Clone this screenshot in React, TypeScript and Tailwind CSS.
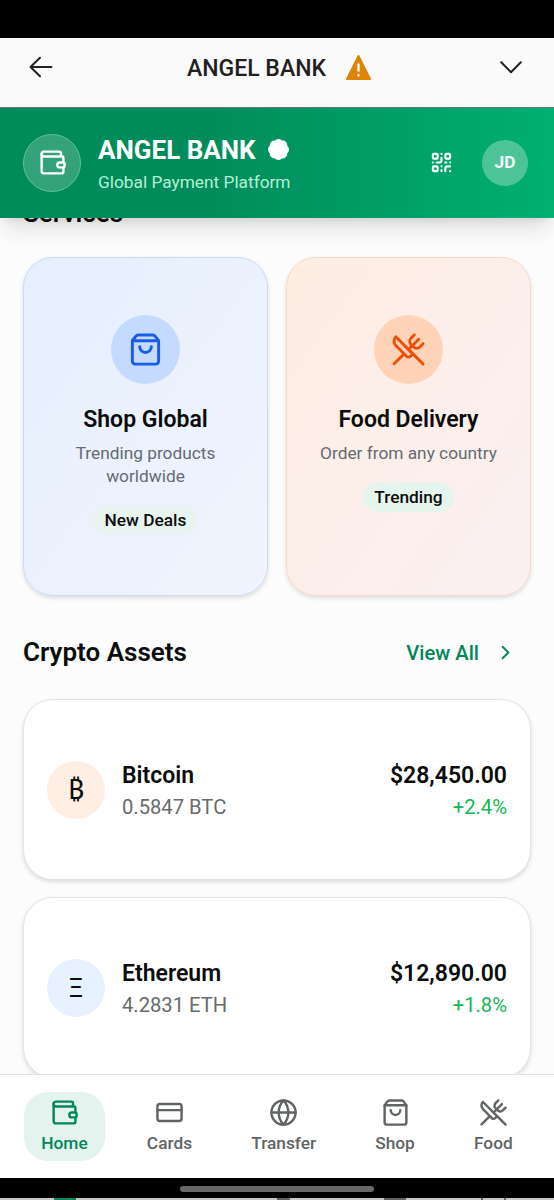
import type { ReactNode } from "react";
import {
  ChevronRight,
  CreditCard,
  Globe,
  QrCode,
  ShoppingBag,
  UtensilsCrossed,
  Wallet,
  type LucideIcon,
} from "lucide-react";

type Service = {
  title: string;
  description: string;
  badge: string;
  icon: LucideIcon;
  cardClass: string;
  iconClass: string;
  badgeClass: string;
};

type Asset = {
  name: string;
  symbol: string;
  amount: string;
  value: string;
  change: string;
  iconClass: string;
};

const services: Service[] = [
  {
    title: "Shop Global",
    description: "Trending products worldwide",
    badge: "New Deals",
    icon: ShoppingBag,
    cardClass: "border-[#c9daf3] from-[#e6effd] to-[#f0f4fe]",
    iconClass: "bg-[#c4daff] text-[#1a5cea]",
    badgeClass: "bg-[#e9f3ef]",
  },
  {
    title: "Food Delivery",
    description: "Order from any country",
    badge: "Trending",
    icon: UtensilsCrossed,
    cardClass: "border-[#f5d9c9] from-[#fdede2] to-[#fbf0f2]",
    iconClass: "bg-[#ffd3b7] text-[#f04e06]",
    badgeClass: "bg-[#e6f4ee]",
  },
];

const assets: Asset[] = [
  {
    name: "Bitcoin",
    symbol: "₿",
    amount: "0.5847 BTC",
    value: "$28,450.00",
    change: "+2.4%",
    iconClass: "bg-[#ffeee3] pb-[4px] font-['Noto_Sans',sans-serif] text-[28px]",
  },
  {
    name: "Ethereum",
    symbol: "Ξ",
    amount: "4.2831 ETH",
    value: "$12,890.00",
    change: "+1.8%",
    iconClass: "bg-[#e7f1ff] pt-px text-[26px]",
  },
];

const navItems: { label: string; icon: LucideIcon }[] = [
  { label: "Home", icon: Wallet },
  { label: "Cards", icon: CreditCard },
  { label: "Transfer", icon: Globe },
  { label: "Shop", icon: ShoppingBag },
  { label: "Food", icon: UtensilsCrossed },
];

const TitleBar = () => (
  <div className="flex h-[70px] shrink-0 items-center border-b border-[#5f7d70] bg-[#fafafa] pr-[32px] pl-[29px] pb-[11px]">
    <button aria-label="Back">
      <svg width="24" height="22" viewBox="0 0 24 22" fill="none" stroke="#222" strokeWidth="2" strokeLinecap="round" strokeLinejoin="round">
        <path d="M22.5 11H1.5M11 1.8 1.5 11l9.5 9.2" />
      </svg>
    </button>
    <h1 className="ml-[134px] pt-[4px] text-[23px] font-medium text-[#202020]">ANGEL BANK</h1>
    <svg className="ml-[19px]" width="27" height="27" viewBox="0 0 27 27">
      <path d="M13.5 2 25 25H2Z" fill="#dc8508" stroke="#dc8508" strokeWidth="2" strokeLinejoin="round" />
      <path d="M13.5 9.5v8M13.5 20v2.4" stroke="#fff" strokeWidth="2.2" />
    </svg>
    <svg className="ml-auto" width="22" height="13" viewBox="0 0 22 13" fill="none" stroke="#222" strokeWidth="2" strokeLinecap="round" strokeLinejoin="round">
      <path d="m1.2 1.3 9.8 9.9 9.8-9.9" />
    </svg>
  </div>
);

const Header = () => (
  <header className="relative z-10 flex h-[110px] shrink-0 items-center bg-linear-to-r from-[#008b5a] from-35% to-[#00b072] pr-[26px] pb-px pl-[23px] shadow-[0_14px_22px_-4px_rgba(0,0,0,0.12),0_6px_9px_-6px_rgba(0,0,0,0.12)]">
    <div className="flex size-[58px] items-center justify-center rounded-full border border-[#5cc49a] bg-[#33a27b]">
      <Wallet className="size-[29px] text-white" />
    </div>
    <div className="ml-[17px]">
      <div className="flex items-center">
        <span className="text-[26px] leading-[38px] font-bold text-white">ANGEL BANK</span>
        <svg className="ml-[11px]" width="23" height="23" viewBox="0 0 24 24" fill="#fff" stroke="#fff" strokeWidth="2">
          <path d="M3.85 8.62a4 4 0 0 1 4.78-4.77 4 4 0 0 1 6.74 0 4 4 0 0 1 4.78 4.78 4 4 0 0 1 0 6.74 4 4 0 0 1-4.77 4.78 4 4 0 0 1-6.75 0 4 4 0 0 1-4.78-4.77 4 4 0 0 1 0-6.76Z" />
        </svg>
      </div>
      <p className="pt-px text-[17.3px] leading-[25px] text-[#b5f0d4]">Global Payment Platform</p>
    </div>
    <QrCode className="ml-auto size-[23px] text-white" strokeWidth={2.2} />
    <div className="ml-[29px] flex size-[46px] items-center justify-center rounded-full bg-[#4dc398] text-[17.3px] font-bold text-[#f3fffa]">
      JD
    </div>
  </header>
);

const SectionTitle = ({ children }: { children: ReactNode }) => (
  <h2 className="text-[26px] leading-[40px] font-semibold">{children}</h2>
);

const ServiceCard = ({ service }: { service: Service }) => {
  const Icon = service.icon;

  return (
    <div
      className={`flex h-[339px] flex-col items-center rounded-[30px] border bg-linear-to-br px-[24px] pt-[57.5px] text-center shadow-[0_2px_4px_rgba(0,0,0,0.13)] ${service.cardClass}`}
    >
      <div className={`flex size-[69px] items-center justify-center rounded-full ${service.iconClass}`}>
        <Icon className="size-[35px]" />
      </div>
      <h3 className="mt-[18px] text-[23px] leading-[35px] font-semibold">{service.title}</h3>
      <p className="mt-[5px] text-[17.3px] leading-[23px] text-[#656b70]">{service.description}</p>
      <span className={`mt-[17px] rounded-full px-[11.5px] py-[3px] text-[17.3px] leading-[24px] font-medium ${service.badgeClass}`}>
        {service.badge}
      </span>
    </div>
  );
};

const AssetCard = ({ asset }: { asset: Asset }) => (
  <div className="flex h-[181px] items-center rounded-[30px] border border-[#dfe7e4] bg-white px-[23px] shadow-[0_2px_4px_rgba(0,0,0,0.13)]">
    <div className={`flex size-[58px] items-center justify-center rounded-full ${asset.iconClass}`}>
      {asset.symbol}
    </div>
    <div className="ml-[17px] flex-1 pt-[2px]">
      <p className="text-[23px] leading-[34px] font-semibold">{asset.name}</p>
      <p className="text-[20.2px] leading-[29px] text-[#666b69]">{asset.amount}</p>
    </div>
    <div className="pt-[2px] text-right">
      <p className="text-[23px] leading-[34px] font-semibold">{asset.value}</p>
      <p className="text-[20.2px] leading-[29px] text-[#16b755]">{asset.change}</p>
    </div>
  </div>
);

const BottomNav = () => (
  <nav className="flex h-[104px] shrink-0 items-start justify-between border-t border-[#dde5e1] bg-white px-[24px] pt-[17px]">
    {navItems.map(({ label, icon: Icon }, index) => (
      <button
        key={label}
        className={`flex h-[69px] flex-col items-center rounded-[24px] px-[17.3px] pt-[6px] ${
          index === 0 ? "bg-[#e4f3ed] text-[#00875a]" : "text-[#606463]"
        }`}
      >
        <Icon className="size-[29px]" />
        <span className="mt-[4px] text-[17.3px] leading-[24px] font-medium">{label}</span>
      </button>
    ))}
  </nav>
);

export default function App() {
  return (
    <div className="flex h-[1200px] w-[554px] flex-col overflow-hidden bg-[#fcfcfc] font-['Roboto',sans-serif] text-[#0b0d0c]">
      <div className="h-[38px] shrink-0 bg-black" />
      <TitleBar />
      <Header />
      <main className="min-h-0 flex-1 overflow-hidden px-[23px]">
        <div className="-mt-[25px]">
          <SectionTitle>Services</SectionTitle>
        </div>
        <div className="mt-[23.5px] grid grid-cols-2 gap-[18px]">
          {services.map((service) => (
            <ServiceCard key={service.title} service={service} />
          ))}
        </div>
        <div className="mt-[36.5px] flex items-center justify-between">
          <SectionTitle>Crypto Assets</SectionTitle>
          <button className="flex items-center gap-[15px] pt-[2px] pr-[14px] text-[20.2px] font-medium text-[#00875a]">
            View All
            <ChevronRight className="size-[23px]" />
          </button>
        </div>
        <div className="mt-[27px] flex flex-col gap-[17px]">
          {assets.map((asset) => (
            <AssetCard key={asset.name} asset={asset} />
          ))}
        </div>
      </main>
      <BottomNav />
      <div className="flex h-[20px] shrink-0 items-center justify-center bg-black pt-[2px]">
        <div className="h-[6px] w-[194px] rounded-full bg-[#686868]" />
      </div>
      {/* sliver of the tab bar below the gesture area */}
      <div className="flex h-[2px] shrink-0 items-end bg-[#c4c8c6]">
        <div className="ml-[54px] h-[2px] w-[22px] bg-[#00875a]" />
        <div className="ml-[201px] h-[2px] w-[13px] bg-[#606463]" />
        <div className="ml-[94px] h-[2px] w-[22px] bg-[#606463]" />
        <div className="ml-[75px] h-[2px] w-[2px] bg-[#606463]" />
        <div className="ml-[21px] h-[2px] w-[2px] bg-[#606463]" />
      </div>
    </div>
  );
}
